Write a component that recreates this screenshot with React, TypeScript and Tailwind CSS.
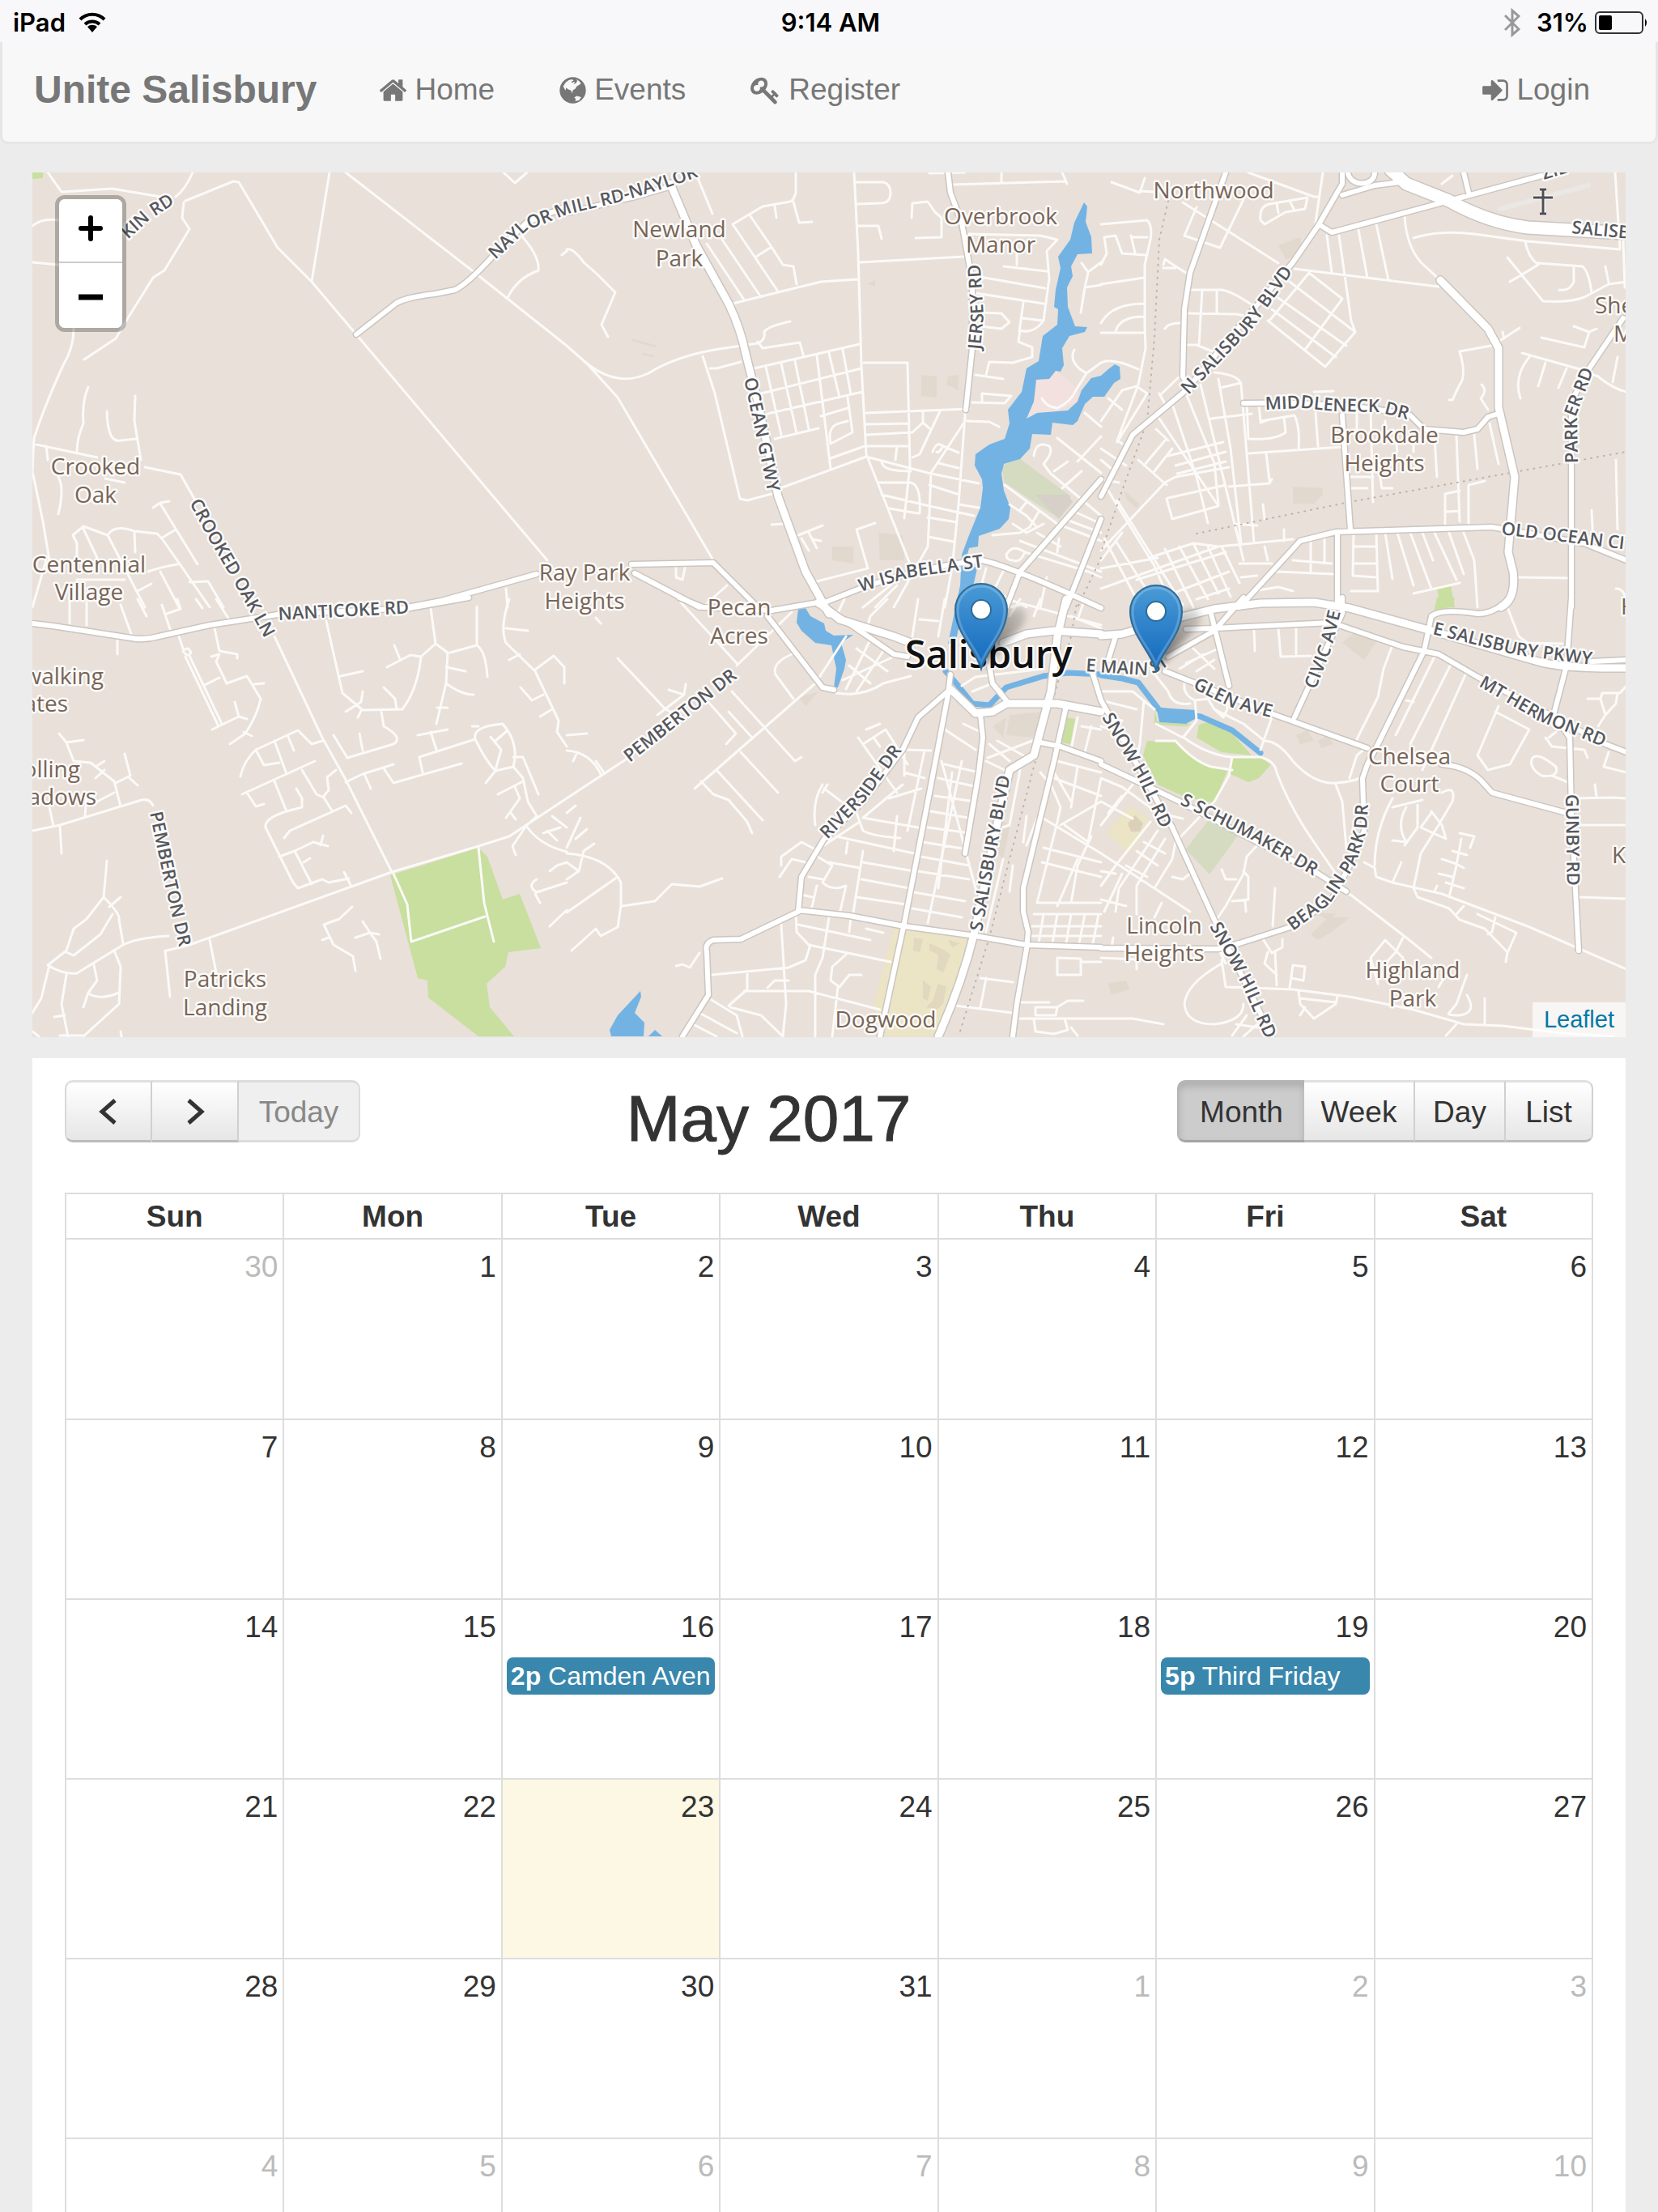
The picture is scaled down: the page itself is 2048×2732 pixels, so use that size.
import React from "react";

type Sheet = { ox: number; oy: number; sx: number; sy: number; minor: string[]; mid: string[]; major: string[]; rail: string[]; areas: [string, string][]; streams: string[] };

const WATER = "#73b3e4";
const PARK = "#c8df9f";
const PALE = "#d4dbc0";
const SCHOOL = "#ebe4c5";
const BLOCK = "#e2d9ce";

/* The town is split in six survey sheets; each sheet has its own grid. */
const sheets: Sheet[] = [
  {
    ox: 40, oy: 210, sx: 0.4209, sy: 0.3444,
    minor: [
      "M45 10 85 77 235 67 390 100", "M470 10 Q450 70 420 95", "M450 110 590 42 605 45 720 280 820 400 950 590 1510 1400",
      "M872 10 820 400", "M920 10 1290 360 1568 630", "M1382 10 1415 47 1452 10", "M445 115 440 170 460 212 388 360 355 385 275 540 245 605 152 680",
      "M0 200 Q30 170 75 180", "M0 330 75 340", "M120 570 Q120 640 90 700 Q40 830 5 960 L0 1080 30 1260 50 1400", "M165 778 Q145 830 150 910 Q130 960 130 1010", "M302 810 300 900 318 1040", "M218 865 Q220 980 260 970 L305 965",
      "M0 980 190 1030", "M40 990 45 1040", "M330 1065 435 1092 475 1180", "M75 1100 Q95 1140 75 1235", "M215 1105 270 1120", "M1435 235 Q1490 310 1485 360 Q1420 390 1395 460",
      "M375 1195 485 1415", "M355 1212 375 1192 402 1188", "M130 1390 130 1340 118 1310 150 1278 220 1310 Q240 1270 300 1295 L365 1305 380 1320 520 1568", "M150 1285 190 1390", "M220 1310 330 1568", "M300 1300 302 1370", "M378 1320 420 1290",
      "M340 1440 Q370 1425 425 1415", "M460 1478 515 1475 560 1568", "M375 1440 430 1568", "M130 1470 270 1470", "M310 1510 350 1485", "M0 1568 40 1400", "M1390 1500 1395 1568", "M1555 305 1568 290",
    ],
    mid: ["M950 590 1070 475 Q1100 455 1180 445 L1240 430 Q1275 410 1350 310 L1450 190 1568 130", "M1100 1568 1200 1545 1480 1450"],
    major: [], rail: [], streams: [], areas: [["M0 10 30 10 30 30 0 32Z", PARK]],
  },
  {
    ox: 700, oy: 210, sx: 0.4209, sy: 0.3444,
    minor: [
      "M0 285 Q20 280 50 330 L90 375 142 438 102 555 122 598", "M0 630 60 695 150 815 430 1400", "M60 695 Q150 780 240 730 Q330 660 480 635 L560 620 Q585 610 580 580 Q590 560 655 542", "M560 615 575 640 685 618 695 670",
      "M385 30 427 158", "M672 10 672 80 Q665 110 655 112 L575 130 488 195 620 435", "M610 130 615 172", "M665 112 682 190 720 185", "M540 165 600 275 635 340 665 345 675 410", "M555 310 600 275", "M455 250 570 455", "M410 265 520 465", "M488 480 600 445 745 402 855 392",
      "M843 10 855 300 865 700 878 1020 1010 1420", "M850 45 930 45 Q950 50 950 80 Q950 118 920 118 L850 122", "M855 200 915 200 925 248", "M860 332 1165 312", "M1130 52 1465 40 M1275 10 1275 45 M1065 12 1170 10 M1455 10 1468 50",
      "M1012 170 1015 118 1060 112 1080 150 1100 170 1100 240 1025 245", "M1180 230 1390 235 1440 250 1410 290 1415 390 1400 540 Q1370 590 1330 575 L1325 615 1365 635 1365 670 1310 692 1240 688 1230 735", "M1320 300 1322 340", "M1282 345 1410 362", "M1200 380 1405 425", "M1200 440 1400 480", "M1340 475 1328 580", "M1338 530 1398 540", "M1215 512 1275 515 1300 545 1275 570 1215 560", "M1200 735 1280 750",
      "M1190 833 1285 836 1305 810 1220 802 1218 830", "M1175 900 1240 902 1268 920", "M872 692 1000 690 1008 1060 990 1248", "M880 872 1180 858", "M880 912 1005 908", "M880 950 1015 940 1045 905 1045 865", "M1045 905 1065 925", "M1095 865 1035 1020 1015 1030", "M880 990 1005 990", "M970 990 965 1040", "M880 1028 1060 1085 1210 1125", "M1170 865 1168 900 1070 1085 1065 1230 1060 1350 960 1568", "M1168 880 1150 1200 1130 1430 1110 1568",
      "M400 668 435 800 508 1180 530 1185 600 1160", "M420 710 440 710 510 688", "M540 715 860 625", "M570 800 865 712", "M590 875 868 797", "M610 965 740 925", "M585 705 630 950", "M630 695 675 945", "M670 685 710 930", "M735 665 775 1070", "M770 655 800 815", "M810 645 835 805", "M745 882 825 855", "M825 815 838 940 775 980 Q765 930 790 912 L825 900", "M775 1035 875 990", "M620 1145 880 1028",
      "M925 1045 Q925 1080 1010 1080", "M915 1122 1010 1120 Q1040 1130 1035 1232", "M925 1165 1065 1205 1195 1240", "M945 1215 1030 1232", "M1065 1130 1145 1160", "M1090 1050 1150 1068", "M1075 1010 Q1085 970 1105 990 1090 1020 1085 1010", "M1105 990 1150 1012", "M1150 1200 1210 1210", "M1060 1245 1145 1262", "M1062 1315 1135 1332",
      "M600 1272 635 1270", "M680 1310 750 1275", "M690 1320 710 1365 M710 1300 735 1355 M720 1325 745 1330", "M905 1265 850 1290 885 1430 735 1475", "M400 1568 470 1490", "M320 1415 320 1460 340 1470 350 1415",
      "M1510 335 1530 365 1568 330", "M1530 370 1520 420 1508 510", "M1520 420 1568 412", "M1490 645 Q1470 690 1525 730 L1495 790 Q1480 830 1440 855 1410 850 1395 820", "M1525 730 1568 690", "M1440 960 1568 1085", "M1500 1045 1568 955", "M1370 1025 Q1375 970 1415 990 1430 1010 1400 1055 L1420 1090 1568 1240", "M1430 1080 1470 1045", "M1455 1140 1510 1080", "M1520 870 1568 920",
      "M1285 1130 1440 1270 1568 1330", "M1300 1200 1350 1240 1375 1275 M1330 1220 1350 1190 M1385 1225 1360 1280 1330 1300 1250 1310", "M1310 1270 1350 1300 1400 1270", "M1330 1330 1568 1440", "M1380 1300 1450 1350 M1445 1320 1440 1370", "M1290 1380 Q1310 1340 1345 1370 1330 1410 1310 1400 1290 1400 1290 1380", "M1345 1370 1530 1440 1568 1460", "M1230 1430 1200 1568 M1280 1440 1240 1540 M1240 1500 1350 1568 M1410 1460 1390 1568", "M1480 1220 1568 1270", "M1460 1250 1568 1300",
      "M870 1568 950 1490 M905 1568 970 1490",
    ],
    mid: ["M0 155 200 95 300 60", "M190 1415 430 1408 560 1568", "M200 1445 390 1568", "M740 1560 860 1500 Q1050 1420 1220 1400 Q1300 1420 1568 1570", "M1118 10 1125 80 1160 190 1190 400 1190 640 1172 860", "M1568 1110 1330 1440 1290 1568", "M1568 1250 1465 1568"],
    major: ["M305 50 380 270 475 480 Q510 570 525 660 L560 830 620 1170 700 1440 770 1590"],
    rail: ["M1568 1390 1500 1568"],
    streams: [],
    areas: [
      ["M1378 752 1435 720 1500 780 1500 830 1440 865 1350 890Z", "#f2e1df"],
      ["M1275 1060 1330 1038 1480 1170 1440 1245 1285 1120Z", PALE],
      ["M1375 1165 1470 1165 1485 1190 1445 1250Z", "#d6d0c8"],
      ["M1518 115 1527 130 1522 185 1540 240 1542 300 1500 303 1480 345 1484 380 1468 420 1470 490 1492 560 1528 563 1520 580 1475 595 1455 640 1458 700 1450 722 1435 720 1415 750 1378 752 1370 830 1350 890 1380 870 1440 865 1470 862 1500 830 1510 790 1540 745 1568 738 1589 715 1608 698 1623 705 1624 750 1605 765 1578 812 1545 812 1520 840 1500 900 1485 915 1425 905 1420 950 1365 948 1358 1000 1330 1038 1282 1053 1275 1090 1283 1150 1302 1210 1298 1250 1270 1285 1210 1312 1208 1350 1180 1357 1172 1400 1205 1430 1195 1480 1170 1540 1140 1700 1120 1700 1155 1490 1160 1380 1180 1310 1215 1210 1222 1140 1218 1110 1197 1060 1200 1020 1240 985 1285 965 1300 910 1296 860 1335 795 1350 710 1385 685 1398 595 1440 555 1443 500 1430 490 1435 430 1450 350 1442 310 1478 250 1490 190Z", WATER],
      ["M1040 735 1085 740 1085 815 1040 810Z M1120 740 1150 735 1150 790 1115 770Z", BLOCK],
      ["M780 1350 840 1350 840 1410 780 1400Z M915 1300 985 1310 990 1400 920 1400Z", BLOCK],
      ["M190 605 265 630 262 635 190 612Z M220 655 260 665 255 672 222 662Z M880 410 905 395 905 415Z", BLOCK],
    ],
  },
  {
    ox: 1360, oy: 210, sx: 0.4388, sy: 0.3444,
    minor: [
      "M30 45 110 80 122 30 M110 75 150 78", "M230 115 500 335", "M270 135 235 235 335 280 410 80", "M415 10 600 95 610 95", "M625 10 605 190", "M450 180 Q445 130 475 122 L580 100 575 140 520 150 460 195 450 180", "M495 120 500 155 M530 110 545 145",
      "M0 195 130 180 Q145 200 140 250 L122 340 122 560 125 640 105 770 45 970 60 980", "M0 410 120 385", "M0 340 15 300 10 240 40 235 60 300 125 305 M85 235 95 295 M90 240 130 240", "M0 550 Q30 480 120 480", "M40 580 Q50 525 120 525", "M0 585 120 585", "M175 340 180 320 195 335 240 370 M175 350 210 350", "M180 570 Q190 545 230 550", "M0 690 Q30 670 105 715", "M250 430 340 430 Q370 435 420 480", "M285 430 275 630 M327 430 327 515", "M245 515 380 518 440 530", "M240 628 270 628 330 660",
      "M320 725 Q390 735 395 770 L430 1335", "M170 800 220 740 M165 800 180 840 M0 900 60 790 100 775 130 800 45 975 M20 820 60 860 M0 1000 70 1060",
      "M165 890 330 1205", "M200 840 270 1100 300 1265", "M240 800 320 1050 330 1200", "M280 770 400 1400", "M330 750 365 1000 395 1340", "M335 780 395 765 M310 890 425 875 M190 1025 345 975 M210 1060 350 1010 M215 1090 350 1045 M105 1040 185 1130 M180 970 120 1060 M200 1000 150 1080 M155 930 190 970",
      "M0 1365 180 1120 210 1100 360 1065", "M190 1175 350 1130 M185 1180 200 1250 330 1205", "M360 1135 475 1125 480 1110 M415 1015 680 992", "M465 1015 475 1115", "M445 845 450 900 545 880 Q560 920 555 1000 M450 905 475 895 M515 885 520 940 Q490 970 415 965 M410 835 415 965",
      "M605 870 610 990 M720 870 720 940 M760 860 765 1190 M800 900 800 960 M600 795 655 793",
      "M635 235 650 370 M670 235 705 540 715 580 632 705 470 540 M725 215 750 385 M775 195 808 395", "M545 355 950 418", "M855 165 Q860 270 900 330 L960 400", "M585 370 475 540 M585 370 678 462 575 645 M530 400 715 580 M500 460 690 630 M480 500 660 670",
      "M880 245 Q950 215 1050 230 L1200 255 1460 285 M1470 250 1475 420 M1448 10 1460 280", "M1195 255 Q1200 310 1230 340 L1150 400 M1145 315 1245 470 Q1320 475 1360 455 L1430 410 1478 400 M1230 335 1355 345 Q1375 370 1380 440 M1330 345 1330 400 Q1320 435 1290 430 M1420 345 1428 405",
      "M1240 602 1360 635 1375 580 1330 560 M1375 580 1395 570", "M1125 610 1178 565 M1130 580 1135 605", "M1010 650 1110 628", "M1010 650 Q1030 740 1010 770 L990 825 980 825 M1070 770 Q1090 790 1068 820 L1090 860", "M1185 655 1340 710 1400 740 Q1440 785 1478 795 M1205 670 Q1160 740 1180 820 M1250 690 1230 775 M1310 710 1288 780 M1455 670 1440 760",
      "M1000 950 1010 1260 M1050 950 1060 1070 M1095 910 1118 1055 M940 960 945 1100 M880 960 880 1010 M830 960 835 1010 M700 1100 765 1100 M700 1140 750 1140 M785 1090 790 1140 820 1140", "M968 1270 968 1160 1010 1150 M970 1225 1010 1222 M1035 1268 1035 1130 1080 1115",
      "M905 1300 935 1400 M870 1300 930 1500 M835 1300 880 1490 M800 1300 820 1465 M940 1300 1000 1470 M980 1300 1020 1450 M1020 1300 1050 1400 1060 1568 M775 1300 780 1510 705 1510 M710 1300 708 1455 775 1460 M710 1350 775 1350 M710 1410 775 1410 M880 1520 1010 1480",
      "M135 1390 260 1340 330 1350 540 1325 M0 1500 330 1350 M20 1150 150 1420 200 1568 M45 1185 230 1560 M180 1360 260 1568 M220 1350 300 1540 M260 1340 330 1520 M300 1350 365 1530 M340 1350 390 1480 M0 1400 60 1300 M10 1320 100 1540 M40 1330 160 1568 M0 1430 160 1390 M100 1470 350 1370 M160 1540 360 1440 M270 1540 360 1500",
      "M390 1410 480 1410 M460 1350 470 1400 M495 1440 655 1450 M540 1400 650 1410 M590 1330 590 1440 M630 1320 630 1410 M455 1200 460 1250 M375 1270 440 1275 M515 1290 515 1330 M395 1460 440 1455 M430 1510 500 1495 540 1510", "M1175 1460 1320 1462 M1450 1040 1455 1290 M1380 1220 1385 1340 M1450 1500 Q1480 1500 1478 1568", "M960 50 990 20 M0 1110 50 1120 M0 1040 30 1070",
    ],
    mid: ["M680 10 680 50 610 200 540 330 240 790 90 950 0 1170", "M350 10 250 370 235 500 230 740 250 790", "M620 200 650 225 980 110 1240 20", "M680 90 770 55 860 40", "M695 10 C700 60 770 60 770 10", "M1020 10 1035 80", "M400 835 Q700 830 870 880 L910 930 1020 942 1060 930 1090 885 1125 870", "M1470 530 1370 720 1325 830 1325 1568", "M390 1568 560 1330 660 1298 1100 1280 1360 1340 1478 1400", "M702 1290 680 880", "M665 1300 665 1568"],
    major: ["M955 395 1090 570 1120 640 1120 850 1165 1100 1147 1370 1160 1440 Q1170 1540 1125 1568"],
    rail: ["M190 110 165 250 150 600 130 900 60 1150 0 1370", "M270 1305 700 1190 1478 1010"],
    streams: [],
    areas: [["M945 1500 985 1490 995 1568 938 1568 950 1530Z", PARK], ["M540 1135 625 1140 625 1165 600 1195 540 1195Z M65 1150 110 1200 100 1215 70 1180Z M515 260 535 265 525 300Z M500 270 560 240 570 300 520 320Z", BLOCK]],
  },
  {
    ox: 40, oy: 740, sx: 0.4209, sy: 0.3571,
    minor: [
      "M110 0 110 85 M160 10 158 90 M260 20 290 120 M310 0 335 58 M380 20 405 105 M395 50 435 35 425 0 M480 0 500 30 M540 0 578 70", "M250 140 250 190", "M430 130 442 170 M442 180 Q455 160 465 185 455 205 442 180", "M450 200 545 435 M462 195 555 430 M528 450 605 405 630 415 M595 355 605 405 M535 100 548 180 600 190 600 205 M525 200 548 190 540 215 570 290 630 265 670 345 Q660 400 625 465 L580 500 M620 460 645 472 M650 295 680 290 M505 298 550 272",
      "M862 75 910 325 970 385 1085 380 Q1130 310 1140 200 L1182 155 1220 185 1215 290 1185 430", "M1170 30 1182 155 M1305 25 1305 160 1225 185 M1305 160 Q1330 180 1335 268 M1140 198 1110 192 1040 235 M1062 160 1078 208 M1215 235 1270 248 M1215 290 Q1260 330 1295 330 M1188 375 1220 375 M905 265 970 248 M970 318 965 355 920 390 M955 410 968 380 M1030 305 1065 345 1068 380",
      "M1025 390 1030 440 Q1090 480 1060 500 L925 550 885 470 M970 525 960 465 M710 130 850 480 920 625 1055 945", "M920 632 970 605 1060 570 M975 605 992 655 M1030 585 1060 635 1260 568 M1145 600 1135 545 1300 485 Q1290 440 1380 430 1430 500 1412 580 L1360 595 1330 635 M1300 485 Q1330 560 1360 595 M1360 590 1375 520 1345 475 M1395 455 1360 490 M1412 545 1440 545 1485 675 M1170 460 1185 520 M1130 470 1220 450 M1290 440 1310 440",
      "M1400 0 Q1370 100 1390 150 L1475 250 1545 420 1540 460 1568 510 M1390 100 1455 110 M1400 210 1430 190 M1475 245 1530 195 1560 235 1560 290 M1432 305 1465 350 1500 330 M1490 405 1525 380",
      "M610 612 Q620 560 655 520 L780 455 820 500 850 490 M655 520 680 575 725 565 M710 490 745 605 M750 475 768 525 M615 675 830 560 M630 670 655 718 680 708 M710 630 745 735 Q680 760 685 790 L765 980 780 1000 850 970 870 980 930 965 M745 735 790 720 790 690 775 655 M790 590 835 675 855 685 880 730 M890 590 865 615 870 660 855 680 M738 825 755 800 920 715 935 740",
      "M725 890 770 870 825 840 868 855 M845 850 852 818 M770 870 820 985 M795 910 815 895 M915 945 935 995", "M0 800 80 780 320 695 Q345 690 355 715 M50 720 62 785 M80 785 85 880 M78 465 100 495 150 487 M100 495 120 560 170 565 240 630 258 718 M185 620 212 590 M185 580 212 560 M270 535 288 610 245 635 M285 620 308 645 M190 700 240 670 M155 750 160 680",
      "M395 1215 460 1195 1055 945 1310 855 1400 820 1568 690", "M390 1215 405 1375 M520 1180 540 1290", "M218 905 210 1030 Q260 1090 255 1110 L265 1190 M210 1030 160 1105 120 1140 100 1215 45 1265 Q90 1300 130 1295 L265 1195 Q310 1170 400 1165 M225 1065 258 1030 M235 1090 200 1160 120 1232 100 1222 M50 1265 25 1380 0 1430 M100 1300 85 1400 105 1512 M240 1215 260 1270 255 1400 150 1512 M180 1265 190 1320 165 1360 150 1410 M165 1365 Q200 1390 255 1360 M65 1445 95 1440 M0 1495 20 1512 M80 1510 150 1510 M260 1495 262 1512",
      "M938 1065 900 1105 855 1125 885 1195 940 1235 948 1285 M850 1180 870 1170 M970 1115 990 1155 1010 1185 1022 1242 M948 1170 990 1155 1018 1160", "M1365 675 1440 630 M1415 650 1430 690 1390 755 M1405 740 1418 762 M1412 580 1440 620 1455 700 1480 750 1450 785 1410 855 1418 885 M1450 785 Q1490 850 1568 875 M1500 810 1550 790 M1525 750 1568 790 M1510 800 1540 835 M1568 910 1540 920 1518 942 M1568 980 1480 1015 Q1450 990 1480 970 M1475 1020 1490 1050 M1568 1075 1518 1130",
      "M1060 950 1100 1055 1112 1185 1328 1098 M1308 860 1325 1050 1355 1185",
    ],
    mid: ["M0 85 60 92 290 135 Q330 142 370 130 L520 90 720 52 1110 30 1280 -5"],
    major: [], rail: [], streams: [],
    areas: [["M1050 955 1310 860 1335 890 1380 1040 1430 1020 1492 1208 1397 1222 1388 1270 1333 1330 1343 1410 1413 1512 1308 1512 1162 1378 1160 1318 1130 1310Z", PARK]],
  },
  {
    ox: 700, oy: 740, sx: 0.4209, sy: 0.3571,
    minor: [
      "M150 205 290 380 M265 400 345 330 350 295 M300 315 345 330 M290 380 315 395 M335 10 500 220 M85 65 100 85 M0 690 180 550 M415 355 497 465 468 500 M475 390 545 480 M485 320 670 560 690 545 M660 45 500 230 M510 530 620 670 M440 590 575 765 M395 630 430 675 475 695 530 770 545 808 M375 655 730 290 820 130 M665 345 612 260 Q600 220 660 190",
      "M0 470 60 465 M0 525 Q70 530 100 605 M20 560 30 530 M85 560 110 600", "M0 740 25 715 M40 755 0 860 M60 795 25 830 M0 880 Q120 890 160 980 L160 1060 150 1135 100 1165 85 1140 15 1215 M150 960 0 1085 M50 870 80 845 M50 870 35 940 0 970 M0 910 35 940 M165 1062 260 1045 310 985 390 995 455 965 M320 1268 340 1262 360 1275 390 1225",
      "M820 310 895 130 M850 320 930 180 M810 280 960 200 M790 325 Q870 340 930 290 L1010 265 M850 170 940 250 M830 230 890 290", "M815 0 790 60 M940 0 890 60 885 90 M1030 0 1015 130 M1110 0 1090 130 M1035 70 1090 75 M1200 60 1330 20",
      "M1290 0 1568 90 M1330 0 1300 60 M1390 0 1370 60 M1520 0 1500 70 M1480 60 1568 100", "M1160 300 1200 270 1400 240 M1190 320 1250 290",
      "M855 480 970 670 M870 500 935 450 1000 570 M880 450 920 430 M900 480 920 510 M1000 520 1070 525 M990 600 1050 620 M990 520 990 610 M945 690 1040 655 M1050 525 1000 800 M870 755 985 640 M750 640 Q720 700 730 780 M755 655 850 740 870 800 Q900 820 980 825 M765 640 750 670 M860 770 730 870 M790 820 1020 880 M825 840 820 880 M870 755 1030 790 M970 750 960 870",
      "M1110 450 1200 520 M1165 430 1215 460 M1110 570 1210 600 M1090 620 1205 650 M1080 680 1200 700 M1070 735 1190 760 M1060 790 1185 810 M1045 840 1175 865 M1160 560 1060 1120 M1100 560 1200 1000 M1040 890 1180 920 M1030 940 1180 970 M1020 1015 1170 1045 M1015 1070 1160 1100 M1130 600 1090 1000",
      "M870 910 1020 940 M865 970 1005 1000 M850 1030 995 1055 M870 870 840 1085 M770 910 860 930 M720 880 780 920 750 980 Q780 1010 820 990 L800 1090 M710 960 750 970 M735 990 720 1065 M680 1020 720 1030 M625 960 660 900 700 910 M630 920 630 890 690 840 730 865",
      "M630 1125 645 1400 635 1512 M672 1080 675 1150 710 1195 950 1255 M680 1125 890 1180 M770 1100 750 1240 730 1300 730 1512 M835 1100 830 1150 M880 1140 930 1155 M715 1195 700 1250 650 1275 425 1300 M530 1295 530 1350 475 1405 M520 1355 710 1355 920 1420 M590 1345 610 1320 650 1320 M820 1230 780 1270 775 1320 800 1340 830 1300 865 1300 M795 1340 780 1512 M425 1385 500 1440 515 1512 M390 1430 500 1500 M370 1470 440 1512 M480 1410 570 1440 635 1512",
      "M1235 550 1365 490 M1240 500 1300 560 M1265 490 1340 540 M1230 560 1300 600 M1500 410 1480 520 M1540 440 1520 530 M1510 440 1568 450", "M1440 560 1568 600 M1430 620 1568 680 M1420 580 1480 700 M1500 580 1480 720 M1420 640 1450 720 1440 770 M1390 600 1420 640",
      "M1380 1050 1568 1050 M1370 1090 1568 1090 M1365 1130 1568 1130 M1360 1165 1568 1165 M1400 1090 1385 1190 M1440 1090 1425 1190 M1480 1090 1465 1190 M1520 1090 1505 1190 M1560 1090 1545 1190",
      "M1440 770 1380 1050 M1400 760 1568 880 M1460 780 1530 840 M1400 860 1568 910 M1395 910 1568 960 M1450 780 1568 700 M1500 900 1440 1060 M1540 820 1500 920 1480 1050 M1350 750 1340 840 M1280 900 1230 1150 M1310 920 1300 1010 M1568 620 1530 840",
      "M1215 1310 1310 1325 M1230 1310 1215 1410 M1140 1405 1310 1430 M1440 1240 1508 1242 1508 1300 1440 1298 1440 1240 M1510 1255 1568 1255 M1330 1395 1415 1395 M1440 1410 1470 1390 1515 1388 M1375 1410 1440 1410 1435 1440 1375 1440 1375 1410 M1330 1450 1568 1450 M1370 1450 1375 1495 1430 1505 M1460 1450 1470 1490 1430 1505 M1480 1480 1500 1510",
      "M1350 850 1380 760 M1330 590 1300 780 1250 800",
    ],
    mid: ["M590 60 750 305 785 315", "M330 -5 400 28 600 40 740 10", "M1125 260 1120 330 1060 700 990 1120 920 1512", "M1125 310 1030 410 985 520 870 700 755 830 690 960 680 1080 510 1175 430 1180 Q405 1190 410 1220 L415 1370 340 1512", "M1215 400 1222 480 1210 600 1170 880", "M680 1075 830 1095 990 1130 1200 1165 1350 1195 1568 1205", "M1465 370 1430 560 1340 1000 1340 1080 1355 1150 1350 1210 1320 1400 1310 1512", "M1390 495 1450 510 1568 560", "M740 10 960 190 1000 200", "M1240 230 1250 290 1290 350", "M1540 240 1568 350"],
    major: ["M740 10 800 70 960 130 1010 150", "M1280 150 1350 120 1430 110 1568 120", "M1125 310 1200 395 1250 390 1290 360 1440 362 1568 390", "M1465 0 1440 130 1420 320 1370 540 1300 590 1260 800 1195 1160 Q1160 1330 1090 1512"],
    rail: ["M1500 0 1480 130 1370 580 1300 900 1240 1170 1150 1512"],
    streams: ["M1112 250 1145 295 1190 360 1240 368 1290 305 1400 265 1470 255 1568 260"],
    areas: [
      ["M680 35 700 30 715 60 755 85 760 110 785 125 840 122 835 130 805 150 820 210 815 240 795 305 785 305 790 240 778 160 730 150 690 110 675 80Z", WATER],
      ["M217 1355 218 1375 200 1430 228 1465 225 1512 130 1512 127 1490 150 1440Z M240 1512 260 1490 280 1512Z", WATER],
      ["M1465 410 1493 415 1478 500 1452 495Z", PARK],
      ["M960 1140 1190 1165 1140 1340 1085 1512 920 1512 900 1400Z", SCHOOL],
      ["M1020 1170 1045 1175 1035 1220 1018 1215Z M1065 1190 1085 1200 1110 1215 1125 1230 1105 1290 1085 1280 1090 1230 1065 1215Z M1045 1320 1070 1340 1060 1390 1045 1380Z M1090 1330 1115 1340 1105 1400 1085 1420 1055 1410 1075 1390Z M1120 1180 1155 1190 1130 1205Z", "#e2d7bf"],
      ["M1300 400 1400 390 1370 480 1290 470Z M1250 440 1290 410 1280 480Z M1250 720 1300 790 1280 900 1240 850Z M680 340 740 320 700 370Z", BLOCK],
    ],
  },
  {
    ox: 1360, oy: 740, sx: 0.4388, sy: 0.3571,
    minor: [
      "M240 105 330 100 M430 110 432 180 M500 100 505 200 590 195 M550 100 550 190 M820 160 795 240 780 340 720 485 M940 200 830 470 M990 215 870 500 M1030 250 905 590 M860 350 880 355 M700 620 720 540 750 510 M1140 15 1175 130 1200 150 1300 155 M1200 175 1190 140", "M260 170 320 240 M240 220 330 170 M220 240 290 190 M270 250 320 210",
      "M140 240 190 320 Q200 370 250 360 M235 290 Q230 330 265 350 L270 420 230 480 155 430 M265 350 300 345 320 380 345 410 355 380 350 310 M320 380 400 430 460 490 Q500 490 540 560 Q600 640 660 635 Q720 630 740 610 M480 410 450 520 M155 490 210 490 Q260 560 310 580 L370 590 M230 475 Q300 540 370 545 L450 545 Q490 560 495 600 Q530 720 600 840 L660 950 M370 545 360 610 320 700 210 840 M660 640 680 700 690 860",
      "M0 320 90 320 150 380 M0 350 100 380 M0 440 50 460 M120 350 110 500 100 560 M0 400 60 420", "M0 780 90 640 M0 620 60 650 160 740 230 760 M0 700 90 760 M20 740 60 680 M0 880 250 1080 M140 770 40 920 0 990 M160 800 90 930 50 1000 40 1080 M180 830 100 990 100 1090 M210 840 200 900 150 1000 M120 840 180 880 M100 870 160 920 M70 920 130 960 M60 950 10 1080 M170 1050 150 1100 M0 940 40 950 M200 960 230 970 250 950 M0 1040 70 1060",
      "M440 850 410 890 400 950 350 1060 320 1120 M340 935 350 970 380 970 M400 940 415 960 415 1040 370 1045 M405 1040 408 1080 M490 1000 482 1130 M455 1175 480 1225 510 1205 510 1175 M470 1220 460 1260 495 1300 M490 1220 495 1335", "M340 1260 Q240 1330 235 1400 Q240 1470 320 1470 Q400 1460 400 1400 M340 1250 350 1340 540 1350 700 1375 880 1420 1020 1470 1130 1475 1300 1500 1440 1512 M530 1345 540 1265 575 1270 570 1320 535 1310 M555 1355 560 1400 600 1450 660 1400 665 1375 M560 1380 660 1395 M560 1440 575 1410 M330 1210 350 1260 M410 1440 370 1510 M440 1470 400 1512 M380 1470 440 1480 M0 1450 90 1450 175 1470 M0 1240 100 1245 M100 1240 100 1280 M30 1205 35 1170",
      "M690 1010 860 1170 930 1240 M850 1170 830 1220 M780 1330 760 1240 800 1180 850 1240 M800 1260 830 1220 M970 1300 950 1340 M1030 1300 1000 1400 980 1430 Q970 1440 1010 1440 1060 1430 1030 1370 M1080 1380 1080 1470 M970 1510 1000 1470",
      "M740 910 770 930 775 960 820 980 960 1020 1200 1130 1478 1280 M820 690 Q770 800 770 920 M820 720 905 695 M860 720 Q830 780 860 840 L820 835 M890 710 890 790 855 850 M960 670 Q1000 640 990 700 L950 780 900 880 880 1000 890 1030 980 1070 1010 1110 1080 1140 1145 1220 1140 1255 M930 740 900 790 970 830 960 780 930 735 M845 910 820 980 M1145 1225 1170 1155 1060 1090 M1110 1100 1100 1150 1090 1160 M1020 1060 1000 1090",
      "M1010 810 1050 820 1040 860 M1015 830 1000 920 980 1030 M990 870 1030 885 M960 900 1000 915 1020 930 M950 950 990 960 M970 980 1020 1000 M945 990 940 1010",
      "M1120 370 1060 540 1090 590 1150 570 1205 450 1110 390 M1250 480 1270 510 1360 520 1370 550 M1260 480 1280 460 M1215 550 Q1230 530 1280 580 1290 620 1240 610 1200 580 1215 550 M1270 610 1320 635 M1370 345 1405 345 1410 325 1460 325 1478 300 M1455 325 1450 360 1420 400 1400 440 M1405 345 1420 400 M1430 530 1415 580 1478 600 M1330 690 1440 685 1478 690 M1390 640 1395 680 M1340 780 1478 780 M1345 1030 1478 1035",
    ],
    mid: ["M0 1207 330 1210 390 1190 540 1130 650 1040 700 920 740 800 735 620 750 570 780 500 910 180 930 60 Q960 30 1060 50 Q1110 50 1150 -5", "M0 570 160 665 220 700 610 950 690 1010", "M0 350 200 790 320 1110 480 1512", "M180 250 490 400 750 515", "M960 572 Q1040 580 1080 640 L1100 670 1310 740", "M240 105 320 100 650 82 850 165 950 190 1060 270 1420 500 1478 530", "M545 410 680 50 680 -5", "M190 200 320 110 400 -5", "M310 50 360 300", "M1325 -5 1310 230 1275 400 1320 480 1325 740 1345 1215", "M1380 215 1478 210", "M40 130 20 210"],
    major: ["M0 125 60 120 200 70 320 35 450 15 600 10 700 30 930 110 1230 215 Q1300 240 1478 238"],
    rail: [],
    streams: ["M0 264 60 275 105 288 165 385 280 405 370 455 450 532"],
    areas: [
      ["M945 -5 995 -5 990 25 938 38Z M130 490 210 495 290 575 355 595 320 705 230 680 160 640 118 540Z M275 435 300 425 370 465 425 540 340 530 270 480Z M370 548 450 548 478 572 445 620 415 632 365 605Z M150 385 160 425 255 430 240 440 150 435Z", PARK],
      ["M300 768 390 808 305 952 240 865Z", PALE],
      ["M80 715 142 768 80 878 15 810Z", SCHOOL],
      ["M95 748 118 775 110 805 85 805 75 775Z", "#dcd0bb"],
      ["M130 320 160 375 270 385 265 415 240 430 165 425 158 380Z", WATER],
      ["M550 470 580 450 600 490 560 500Z M610 490 640 470 655 500 620 515Z M680 150 720 110 780 140 740 210Z M640 1100 700 1100 650 1150 610 1180 590 1160Z M590 1080 660 1090 640 1110Z M20 1330 70 1320 80 1350 30 1370Z", BLOCK],
    ],
  },
];

const place = (s: Sheet, d: string) =>
  d.replace(/(-?\d+) (-?\d+)/g, (_m, x, y) => `${Math.round(s.ox + Number(x) * s.sx)} ${Math.round(s.oy + Number(y) * s.sy)}`);

const gather = (key: "minor" | "mid" | "major" | "rail" | "streams") => sheets.map((s) => s[key].map((d) => place(s, d)).join(" ")).join(" ");

const highway = "M1718 210 L1737 227 L1790 248 Q1838 275 1887 281 L2010 288";
const plane = "M1906 234 V264 M1894 244 H1918 M1902 234 H1910 M1902 264 H1910";

const streets: [string, string][] = [
  ["KIN RD", "M158 296 L184 272 L230 242"],
  ["NAYLOR MILL RD-NAYLOR", "M612 321 L650 285 L700 265 L767 249 L826 231 L880 212"],
  ["CROOKED OAK LN", "M234 621 L258 666 L284 710 L340 812"],
  ["NANTICOKE RD", "M344 766 L530 756"],
  ["PEMBERTON DR", "M185 1004 L204 1094 L226 1190"],
  ["PEMBERTON DR", "M778 942 L850 885 L930 822"],
  ["OCEAN GTWY", "M919 468 L933 533 L955 640"],
  ["JERSEY RD", "M1211 432 L1215 390 L1209 300"],
  ["W ISABELLA ST", "M1063 731 L1125 713 L1230 698"],
  ["N SALISBURY BLVD", "M1468 488 L1549 403 L1615 310"],
  ["MIDDLENECK DR", "M1563 506 L1610 504 L1650 508 L1704 509 L1760 524"],
  ["PARKER RD", "M1949 572 L1948 510 L1975 440"],
  ["OLD OCEAN CITY", "M1854 660 L1930 669 L2020 680"],
  ["SALISBURY", "M1941 288 L2100 303"],
  ["ZIE", "M1907 222 L1960 206"],
  ["E MAIN ST", "M1341 829 L1417 834 L1432 829 L1470 805"],
  ["GLEN AVE", "M1473 850 L1520 873 L1600 894"],
  ["CIVIC AVE", "M1625 852 L1645 800 L1660 740"],
  ["E SALISBURY PKWY", "M1769 783 L1873 809 L1990 824"],
  ["MT HERMON RD", "M1826 847 L1900 890 L2000 930"],
  ["GUNBY RD", "M1934 981 L1936 1120"],
  ["SNOW HILL RD", "M1361 886 L1404 958 L1446 1050"],
  ["S SCHUMAKER DR", "M1457 993 L1549 1039 L1640 1092"],
  ["BEAGLIN PARK DR", "M1597 1150 L1643 1116 L1674 1069 L1688 1026 L1692 960"],
  ["SNOW HILL RD", "M1494 1144 L1535 1218 L1568 1295"],
  ["RIVERSIDE DR", "M1022 1037 L1070 988 L1130 905"],
  ["S SALISBURY BLVD", "M1213 1151 L1229 1061 L1253 930"],
];

type Anchor = "start" | "middle" | "end";
const places: [string, number, number, Anchor][] = [
  ["Crooked", 118, 586, "middle"], ["Oak", 118, 621, "middle"],
  ["Centennial", 110, 707, "middle"], ["Village", 110, 741, "middle"],
  ["walking", 128, 845, "end"], ["ates", 84, 879, "end"],
  ["olling", 99, 960, "end"], ["adows", 119, 994, "end"],
  ["Ray Park", 722, 717, "middle"], ["Heights", 722, 752, "middle"],
  ["Newland", 839, 293, "middle"], ["Park", 839, 329, "middle"],
  ["Overbrook", 1236, 277, "middle"], ["Manor", 1236, 312, "middle"],
  ["Pecan", 913, 760, "middle"], ["Acres", 913, 795, "middle"],
  ["Dogwood", 1094, 1269, "middle"], ["Northwood", 1499, 245, "middle"],
  ["Brookdale", 1710, 547, "middle"], ["Heights", 1710, 582, "middle"],
  ["She", 1970, 387, "start"], ["M", 1993, 422, "start"],
  ["Chelsea", 1741, 944, "middle"], ["Court", 1741, 978, "middle"],
  ["Lincoln", 1438, 1153, "middle"], ["Heights", 1438, 1187, "middle"],
  ["Highland", 1745, 1208, "middle"], ["Park", 1745, 1243, "middle"],
  ["Patricks", 278, 1219, "middle"], ["Landing", 278, 1254, "middle"],
  ["K", 1991, 1066, "start"], ["H", 2002, 759, "start"],
];

function Pin({ x, y }: { x: number; y: number }) {
  return (
    <g transform={`translate(${x} ${y})`}>
      <path className="blur-[4px]" d="M0 0 L50 -52 Q62 -70 48 -76 Q26 -76 12 -50 Z" fill="url(#pinShadow)" />
      <path d="M0 0 C-8 -26 -32 -44 -32 -73 A32 32 0 0 1 32 -73 C32 -44 8 -26 0 0Z" fill="url(#pin)" stroke="#2e6c97" strokeWidth="2" />
      <path d="M0 -8 C-9 -30 -29 -46 -29 -73 A29 29 0 0 1 29 -73 C29 -46 9 -30 0 -8Z" fill="none" stroke="#fff" strokeOpacity="0.2" strokeWidth="3" />
      <circle cx="0" cy="-73" r="12" fill="#fff" stroke="#2e6c97" strokeWidth="2" />
    </g>
  );
}

function TownMap() {
  const minor = gather("minor");
  const mid = gather("mid");
  const major = gather("major");
  return (
    <svg className="block h-full w-full bg-[#e8e0d9]" viewBox="40 213 1968 1068" preserveAspectRatio="xMidYMid slice" role="img" aria-label="Map of Salisbury">
      <defs>
        <linearGradient id="pin" x1="0" y1="0" x2="0" y2="1">
          <stop offset="0" stopColor="#4a9bd6" />
          <stop offset="1" stopColor="#1268bd" />
        </linearGradient>
        <linearGradient id="pinShadow" x1="0" y1="1" x2="1" y2="0">
          <stop offset="0" stopColor="#000" stopOpacity="0.6" />
          <stop offset="1" stopColor="#000" stopOpacity="0.1" />
        </linearGradient>
        {streets.map(([, d], i) => (
          <path key={i} id={`street${i}`} d={d} />
        ))}
      </defs>
      {sheets.map((s, i) => s.areas.map(([d, fill], j) => <path key={`${i}-${j}`} d={place(s, d)} fill={fill} />))}
      <g fill="none" strokeLinejoin="round" strokeLinecap="round">
        <path d={gather("streams")} stroke={WATER} strokeWidth="7" />
        <path d="M1853 258 L1962 229" stroke="#e9e8e4" strokeWidth="6" />
        <path d={minor} stroke="#fcfaf8" strokeWidth="3" />
        <path d={gather("rail")} stroke="#b9b4af" strokeWidth="2" strokeDasharray="1 7" />
        <path d={mid} stroke="#cbc5c0" strokeWidth="9" />
        <path d={major} stroke="#cbc5c0" strokeWidth="12" />
        <path d={highway} stroke="#cbc5c0" strokeWidth="18" />
        <path d={mid} stroke="#fff" strokeWidth="6" />
        <path d={major} stroke="#fff" strokeWidth="9" />
        <path d={highway} stroke="#fff" strokeWidth="15" />
        <path d={plane} stroke="#fff" strokeWidth="5" strokeLinecap="butt" />
        <path d={plane} stroke="#4d4f55" strokeWidth="3" strokeLinecap="butt" />
      </g>
      <g fontFamily='"Open Sans", "Noto Sans", sans-serif' stroke="#fff" strokeOpacity="0.85" strokeWidth="5" strokeLinejoin="round" style={{ paintOrder: "stroke" }}>
        <g fontSize="22" fontWeight="600" fill="#56585e">
          {streets.map(([name], i) => (
            <text key={i}>
              <textPath href={`#street${i}`}>{name}</textPath>
            </text>
          ))}
        </g>
        <g fontSize="28" fill="#786557">
          {places.map(([name, x, y, anchor], i) => (
            <text key={i} x={x} y={y} textAnchor={anchor}>{name}</text>
          ))}
        </g>
        <text x="1221" y="825" textAnchor="middle" fontSize="47" fontWeight="600" fill="#111">Salisbury</text>
      </g>
      <Pin x={1212} y={826} />
      <Pin x={1428} y={828} />
    </svg>
  );
}

const HomeIcon = () => (
  <svg className="h-[37px] w-[37px]" viewBox="0 0 1792 1792" fill="currentColor" aria-hidden="true">
    <path d="M1472 992v480q0 26-19 45t-45 19h-384v-384h-256v384h-384q-26 0-45-19t-19-45v-480q0-1 .5-3t.5-3l575-474 575 474q1 2 1 6zm223-69l-62 74q-8 9-21 11h-3q-13 0-21-7l-692-577-692 577q-12 8-24 7-13-2-21-11l-62-74q-8-10-7-23.5t11-21.5l719-599q32-26 76-26t76 26l244 204v-195q0-14 9-23t23-9h192q14 0 23 9t9 23v408l219 182q10 8 11 21.5t-7 23.5z" />
  </svg>
);

const GlobeIcon = () => (
  <svg className="h-[33px] w-[33px]" viewBox="0 0 98 98" aria-hidden="true">
    <circle cx="49" cy="49" r="48" fill="currentColor" />
    <path d="M14 34 Q20 20 34 12 L47 9 L52 14 L44 17 L46 22 L54 18 L57 20 L51 26 L60 24 L66 14 L60 9 Q72 12 79 24 L72 30 L64 34 L58 44 L50 48 L46 60 L43 50 L33 46 L25 40 L22 50Z M54 76 L64 70 L80 74 L72 86 L58 88 L60 80Z" fill="#f8f8f8" />
  </svg>
);

const KeyIcon = () => (
  <svg className="h-[37px] w-[37px]" viewBox="0 0 1792 1792" fill="currentColor" aria-hidden="true">
    <path d="M832 512q0-80-56-136t-136-56-136 56-56 136q0 42 19 83-41-19-83-19-80 0-136 56t-56 136 56 136 136 56 136-56 56-136q0-42-19-83 41 19 83 19 80 0 136-56t56-136zm851 704q0 17-49 66t-66 49q-9 0-28.5-16t-36.5-33-38.5-40-24.5-26l-96 96 220 220q28 28 28 68 0 42-39 81t-81 39q-40 0-68-28l-671-671q-176 131-365 131-163 0-265.5-102.5t-102.5-265.5q0-160 95-313t248-248 313-95q163 0 265.5 102.5t102.5 265.5q0 189-131 365l355 355 96-96q-3-3-26-24.5t-40-38.5-33-36.5-16-28.5q0-17 49-66t66-49q13 0 23 10 6 6 46 44.5t82 79.5 86.5 86 73 78 28.5 41z" />
  </svg>
);

const LoginIcon = () => (
  <svg className="h-[37px] w-8" viewBox="0 0 1536 1792" fill="currentColor" aria-hidden="true">
    <path d="M1184 896q0 26-19 45l-544 544q-19 19-45 19t-45-19-19-45v-288h-448q-26 0-45-19t-19-45v-384q0-26 19-45t45-19h448v-288q0-26 19-45t45-19 45 19l544 544q19 19 19 45zm352-352v704q0 119-84.5 203.5t-203.5 84.5h-320q-13 0-22.5-9.5t-9.5-22.5q0-4-1-20t-.5-26.5 3-23.5 10-19.5 20.5-6.5h320q66 0 113-47t47-113v-704q0-66-47-113t-113-47h-312l-11.5-1-11.5-3-8-5.5-7-9-2-13.5q0-4-1-20t-.5-26.5 3-23.5 10-19.5 20.5-6.5h320q119 0 203.5 84.5t84.5 203.5z" />
  </svg>
);

function StatusBar() {
  return (
    <div className="grid h-[52px] grid-cols-3 items-center bg-[#f8f8fa] pt-1 pr-3 pl-4 font-['Inter','Roboto',sans-serif] text-[31px] leading-[40px] font-semibold text-black">
      <div className="flex items-center gap-4">
        <span>iPad</span>
        <svg className="h-[26px] w-[34px]" viewBox="0 0 34 26" fill="none" stroke="#000" strokeWidth="4" aria-hidden="true">
          <path d="M2 9 A21 21 0 0 1 32 9 M8 15 A13 13 0 0 1 26 15" />
          <path d="M17 25 L11 18 A9 9 0 0 1 23 18Z" fill="#000" stroke="none" />
        </svg>
      </div>
      <span className="text-center">9:14 AM</span>
      <div className="flex items-center justify-end gap-2">
        <svg className="h-9 w-5" viewBox="0 0 20 36" fill="none" stroke="#999" strokeWidth="3" aria-hidden="true">
          <path d="M1 9 L18 26 L10 33 V3 L18 10 L1 27" />
        </svg>
        <span className="pl-3">31%</span>
        <svg className="h-7 w-[66px]" viewBox="0 0 66 28" aria-hidden="true">
          <rect x="1" y="1" width="58" height="26" rx="5" fill="none" stroke="#333" strokeWidth="2" />
          <rect x="5" y="5" width="16" height="18" rx="2" fill="#000" />
          <path d="M62 9 Q66 14 62 19Z" fill="#000" />
        </svg>
      </div>
    </div>
  );
}

function NavBar() {
  return (
    <nav className="flex h-[126px] items-start rounded-b-[10px] border-x-[3px] border-b-[3px] border-[#e6e6e6] bg-[#f8f8f8] pt-[33px] pr-[81px] pl-[39px] text-[37px] leading-[52px] text-[#777]">
      <a href="#top" className="text-[48px] font-bold">Unite Salisbury</a>
      <a href="#home" className="ml-[76px] flex items-center gap-2"><HomeIcon />Home</a>
      <a href="#events" className="ml-20 flex items-center gap-[10px]"><GlobeIcon />Events</a>
      <a href="#register" className="ml-20 flex items-center gap-[10px]"><KeyIcon />Register</a>
      <a href="#login" className="ml-auto flex items-center gap-[10px]"><LoginIcon />Login</a>
    </nav>
  );
}

const plain = "border-y-[3px] border-r-2 border-t-[#e0e0e0] border-r-[#d0d0d0] border-b-[#bcbcbc] bg-linear-to-b from-white to-[#e6e6e6] h-[77px]";
const DAYS = ["Sun", "Mon", "Tue", "Wed", "Thu", "Fri", "Sat"];
const START = new Date(2017, 3, 30);
const EVENTS: Record<string, [string, string]> = { "4-16": ["2p", "Camden Aven"], "4-19": ["5p", "Third Friday"] };

function Calendar() {
  return (
    <section className="mx-10 mt-[26px] flex-1 bg-white px-10 pt-[27px]">
      <div className="mb-[43px] flex items-start justify-between text-[37px] leading-[73px] text-[#333]">
        <div className="flex">
          <button aria-label="Previous" className={`${plain} flex w-[108px] items-center justify-center rounded-l-[10px] border-l-2 border-l-[#d8d8d8]`}>
            <svg className="h-8 w-6" viewBox="0 0 24 32" fill="none" stroke="currentColor" strokeWidth="5" aria-hidden="true"><path d="M20 2 L4 16 L20 30" /></svg>
          </button>
          <button aria-label="Next" className={`${plain} flex w-[107px] items-center justify-center`}>
            <svg className="h-8 w-6" viewBox="0 0 24 32" fill="none" stroke="currentColor" strokeWidth="5" aria-hidden="true"><path d="M4 2 L20 16 L4 30" /></svg>
          </button>
          <button disabled className="h-[77px] w-[150px] rounded-r-[10px] border-y-[3px] border-r-2 border-[#dcdcdc] bg-[#efefef] text-[#888]">Today</button>
        </div>
        <h2 className="text-[80px] leading-[96px] [-webkit-text-stroke:1px_#333]">May 2017</h2>
        <div className="flex">
          <button aria-pressed="true" className="h-[77px] w-[157px] rounded-l-[10px] border-y-[3px] border-l-2 border-[#b4b4b4] border-b-[#a4a4a4] bg-[#ccc] shadow-[inset_0_5px_10px_rgba(0,0,0,0.15)]">Month</button>
          <button className={`${plain} w-[137px]`}>Week</button>
          <button className={`${plain} w-[112px]`}>Day</button>
          <button className={`${plain} w-[108px] rounded-r-[10px]`}>List</button>
        </div>
      </div>
      <table className="w-full table-fixed border-collapse text-[37px] leading-[53px] text-[#333]">
        <thead>
          <tr className="h-14">
            {DAYS.map((d) => (
              <th key={d} scope="col" className="border-2 border-[#ddd] p-0 text-center font-bold">{d}</th>
            ))}
          </tr>
        </thead>
        <tbody>
          {[0, 1, 2, 3, 4, 5].map((w) => (
            <tr key={w} className="h-[222px] first:h-[223px]">
              {DAYS.map((d, i) => {
                const day = new Date(START);
                day.setDate(START.getDate() + w * 7 + i);
                const key = `${day.getMonth()}-${day.getDate()}`;
                const event = EVENTS[key];
                return (
                  <td key={d} className={`border-2 border-[#ddd] p-0 align-top ${key === "4-23" ? "bg-[#fcf8e3]" : ""}`}>
                    <div className={`pt-[7px] pr-[6px] text-right ${day.getMonth() === 4 ? "" : "text-[#bbb]"}`}>{day.getDate()}</div>
                    {event && (
                      <a href={`#event-${key}`} className="mx-[5px] mt-[11px] block h-[46px] overflow-hidden rounded-lg bg-[#3a87ad] px-[5px] text-[32px] leading-[46px] whitespace-nowrap text-white">
                        <b>{event[0]}</b> {event[1]}
                      </a>
                    )}
                  </td>
                );
              })}
            </tr>
          ))}
        </tbody>
      </table>
    </section>
  );
}

export default function App() {
  return (
    <div className="flex h-screen flex-col overflow-hidden bg-[#ececec] font-['Liberation_Sans',Arial,sans-serif]">
      <header className="shrink-0">
        <StatusBar />
        <NavBar />
      </header>
      <div className="relative mx-10 mt-[35px] h-[1068px] shrink-0 overflow-hidden">
        <TownMap />
        <div className="absolute top-7 left-7 flex w-[88px] flex-col rounded-[12px] border-[5px] border-black/25 bg-clip-padding">
          <button aria-label="Zoom in" className="flex h-[79px] items-center justify-center rounded-t-[7px] border-b-2 border-[#ccc] bg-white pb-[6px]">
            <svg className="h-8 w-8" viewBox="0 0 32 32" stroke="#000" strokeWidth="6" strokeLinecap="round" aria-hidden="true"><path d="M16 3 V29 M4 16 H28" /></svg>
          </button>
          <button aria-label="Zoom out" className="flex h-[80px] items-center justify-center rounded-b-[7px] bg-white pt-1">
            <svg className="h-8 w-8" viewBox="0 0 32 32" stroke="#000" strokeWidth="7" aria-hidden="true"><path d="M1 16 H31" /></svg>
          </button>
        </div>
        <div className="absolute right-0 bottom-0 bg-white/70 px-[14px] text-[29px] leading-[43px]">
          <a href="#leaflet" className="text-[#0078a8]">Leaflet</a>
        </div>
      </div>
      <Calendar />
    </div>
  );
}
